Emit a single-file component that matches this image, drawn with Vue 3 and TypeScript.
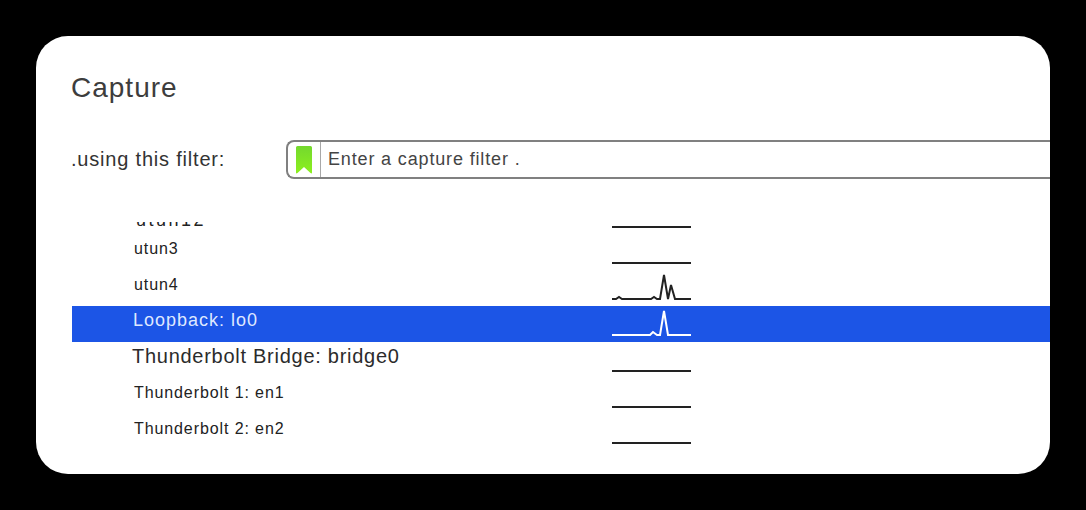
<script setup lang="ts">
interface Row {
  name: string
  spark: string
  kind?: string
}
const flat = 'M0 8H79'
const rows: Row[] = [
  { name: 'utun3', spark: flat },
  { name: 'utun4', spark: 'M0 8H4L7 6L10 8H39L42 6L45 8H48L52 -16L56 8L59 -6L63 8H79' },
  { name: 'Loopback: lo0', spark: 'M0 8H38L41 5L45 8H48L52 -16L56 8H79', kind: 'selected' },
  { name: 'Thunderbolt Bridge: bridge0', spark: flat, kind: 'large' },
  { name: 'Thunderbolt 1: en1', spark: flat },
  { name: 'Thunderbolt 2: en2', spark: flat },
]
</script>

<template>
  <main class="card">
    <h1 class="title">Capture</h1>
    <div class="filter-row">
      <label class="filter-label">.using this filter:</label>
      <div class="filter-box">
        <span class="bookmark">
          <svg width="16" height="28" viewBox="0 0 16 28">
            <defs>
              <linearGradient id="bm" x1="0" y1="0" x2="0" y2="1">
                <stop offset="0" stop-color="#74d82e" />
                <stop offset="1" stop-color="#8cf01e" />
              </linearGradient>
            </defs>
            <path d="M1.500 0H14.500Q16 0 16 1.500V26.500Q16 28 14.500 27L8 21L1.500 27Q0 28 0 26.500V1.500Q0 0 1.500 0Z" fill="url(#bm)" />
          </svg>
        </span>
        <span class="filter-text">Enter a capture filter .</span>
      </div>
    </div>
    <div class="list">
      <div class="row clipped">
        <span class="name"><span>utun12</span></span>
        <svg class="spark" width="79" height="12" viewBox="0 -4 79 12"><path d="M0 1H79" /></svg>
      </div>
      <div v-for="row in rows" :key="row.name" class="row" :class="row.kind">
        <span class="name">{{ row.name }}</span>
        <svg class="spark" width="79" height="36" viewBox="0 -21 79 36"><path :d="row.spark" /></svg>
      </div>
    </div>
  </main>
</template>

<style>
html, body { margin: 0; background: #000; }
</style>

<style scoped>
.card {
  box-sizing: border-box;
  width: 1014px;
  height: 438px;
  margin: 36px 0 0 36px;
  padding: 34px 0 0 35px;
  background: #fff;
  border-radius: 32px;
  overflow: hidden;
  font-family: "Liberation Sans", Arial, sans-serif;
  color: #333;
}
.title {
  margin: 0;
  font-size: 28px;
  line-height: 36px;
  font-weight: 400;
  letter-spacing: 1px;
  color: #3d3d3d;
}
.filter-row {
  display: flex;
  align-items: center;
  margin-top: 34px;
}
.filter-label {
  width: 215px;
  font-size: 20px;
  letter-spacing: 0.8px;
  color: #333;
}
.filter-box {
  box-sizing: border-box;
  flex: 1;
  height: 39px;
  display: flex;
  align-items: center;
  border: 2px solid #808080;
  border-right: 0;
  border-radius: 8px 0 0 8px;
}
.bookmark {
  width: 33px;
  height: 100%;
  box-sizing: border-box;
  padding-left: 8px;
  display: flex;
  align-items: center;
  border-right: 1px solid #a8a8a8;
}
.filter-text {
  padding-left: 7px;
  font-size: 18px;
  letter-spacing: 0.85px;
  color: #444;
}
.list {
  margin: 43px 0 0 1px;
}
.row {
  height: 36px;
  display: flex;
  align-items: center;
  padding-left: 62px;
  font-size: 16px;
  letter-spacing: 0.9px;
  color: #222;
  overflow: hidden;
}
.name {
  width: 478px;
  flex: none;
  white-space: nowrap;
  padding-bottom: 7px;
}
.spark {
  flex: none;
}
.spark path {
  fill: none;
  stroke: #222;
  stroke-width: 2;
}
.clipped {
  height: 12px;
  align-items: flex-start;
}
.clipped .name {
  width: 476px;
  height: 4px;
  padding: 0 0 0 2px;
  display: flex;
  align-items: flex-end;
  overflow: hidden;
  line-height: 12px;
  font-size: 18px;
  letter-spacing: 2.5px;
}
.selected {
  background: #1c55e6;
  color: #dfe8ff;
}
.selected .name {
  font-size: 18px;
  letter-spacing: 1px;
  margin-left: -1px;
  margin-right: 1px;
}
.selected .spark path {
  stroke: #fff;
}
.large {
  font-size: 20px;
  letter-spacing: 0.73px;
  color: #2b2b2b;
}
.large .name {
  margin-left: -2px;
  margin-right: 2px;
}
</style>
